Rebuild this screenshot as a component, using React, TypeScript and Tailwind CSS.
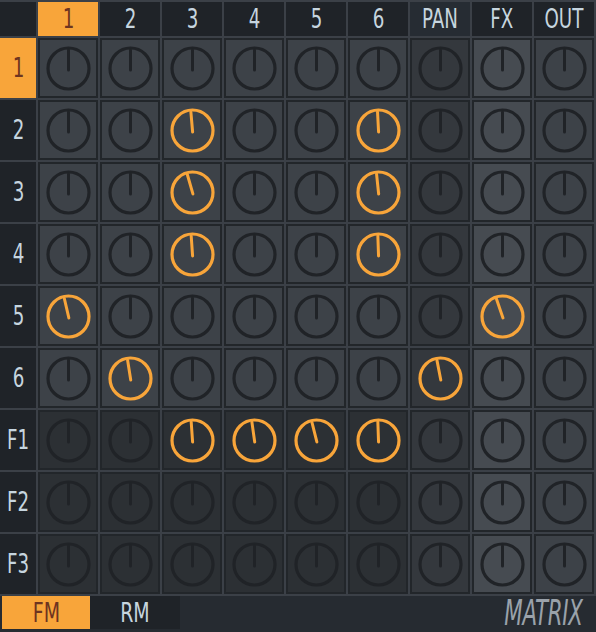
import React from "react";

const COLS = ["1", "2", "3", "4", "5", "6", "PAN", "FX", "OUT"];
const ROWS = ["1", "2", "3", "4", "5", "6", "F1", "F2", "F3"];

// active (orange) knobs: "row-col" -> angle in degrees
const ACTIVE: Record<string, number> = {
  "1-2": -5,
  "1-5": -3,
  "2-2": -16,
  "2-5": -6,
  "3-2": -4,
  "3-5": -2,
  "4-0": -13,
  "4-7": -19,
  "5-1": -9,
  "5-6": -11,
  "6-2": -4,
  "6-3": -8,
  "6-4": -14,
  "6-5": -2,
};

function cellFill(r: number, c: number) {
  if (c === 6) return "bg-[#34383d]";
  if (c === 7) return "bg-[#464b51]";
  if (c === 8) return "bg-[#3d4248]";
  if (r >= 6) return "bg-[#2c3034]";
  return "bg-[#3d4248]";
}

function Knob({ angle, active }: { angle: number; active: boolean }) {
  const color = active ? "#f8a53a" : "#202327";
  return (
    <svg width="56" height="56" viewBox="0 0 56 56">
      <circle cx="28.5" cy="28.5" r="20.5" fill="none" stroke={color} strokeWidth="3.2" />
      <line
        x1="28.5"
        y1="10"
        x2="28.5"
        y2="30"
        stroke={color}
        strokeWidth="3"
        strokeLinecap="round"
        transform={`rotate(${angle} 28.5 28.5)`}
      />
    </svg>
  );
}

const font = { fontFamily: '"DejaVu Sans Condensed", "DejaVu Sans", sans-serif' };

export default function App() {
  return (
    <div className="w-[596px] h-[632px] bg-[#3b4047] overflow-hidden" style={font}>
      <div className="grid grid-cols-[36px_repeat(9,60px)] grid-rows-[34px_repeat(9,60px)] gap-[2px] pt-[2px] pr-[2px] pb-[2px]">
        <div className="bg-[#1f2328]" />
        {COLS.map((c, i) => (
          <div
            key={c}
            className={`flex items-center justify-center text-[26px] leading-none ${
              i === 0
                ? "bg-[#f8a53a] text-[#6e3420]"
                : i === 6
                ? "bg-[#262c33] text-[#c6d5df]"
                : "bg-[#1f2328] text-[#c6d5df]"
            }`}
          >
            <span className="scale-x-[0.78]">{c}</span>
          </div>
        ))}
        {ROWS.map((row, r) => (
          <React.Fragment key={row}>
            <div
              className={`flex items-center justify-center text-[26px] leading-none ${
                r === 0 ? "bg-[#f8a53a] text-[#6e3420]" : "bg-[#1f2328] text-[#c6d5df]"
              }`}
            >
              <span className="scale-x-[0.78]">{row}</span>
            </div>
            {COLS.map((_, c) => {
              const key = `${r}-${c}`;
              const active = key in ACTIVE;
              return (
                <div
                  key={key}
                  className={`flex items-center justify-center border-2 border-[#22262a] ${cellFill(r, c)}`}
                >
                  <Knob angle={active ? ACTIVE[key] : 0} active={active} />
                </div>
              );
            })}
          </React.Fragment>
        ))}
      </div>
      <div className="flex h-[36px] bg-[#262b31] pl-[2px]">
        <div className="w-[88px] h-[33px] bg-[#f8a53a] text-[#6e3420] flex items-center justify-center text-[27px] leading-none">
          <span className="scale-x-[0.78]">FM</span>
        </div>
        <div className="w-[90px] h-[33px] bg-[#1f2328] text-[#c6d5df] flex items-center justify-center text-[27px] leading-none">
          <span className="scale-x-[0.78]">RM</span>
        </div>
        <div className="flex-1 h-[33px] flex items-center justify-end pr-[14px]">
          <span className="italic text-[36px] leading-none text-[#9aa2aa] scale-x-[0.66] origin-right tracking-[-0.5px]">
            MATRIX
          </span>
        </div>
      </div>
    </div>
  );
}
